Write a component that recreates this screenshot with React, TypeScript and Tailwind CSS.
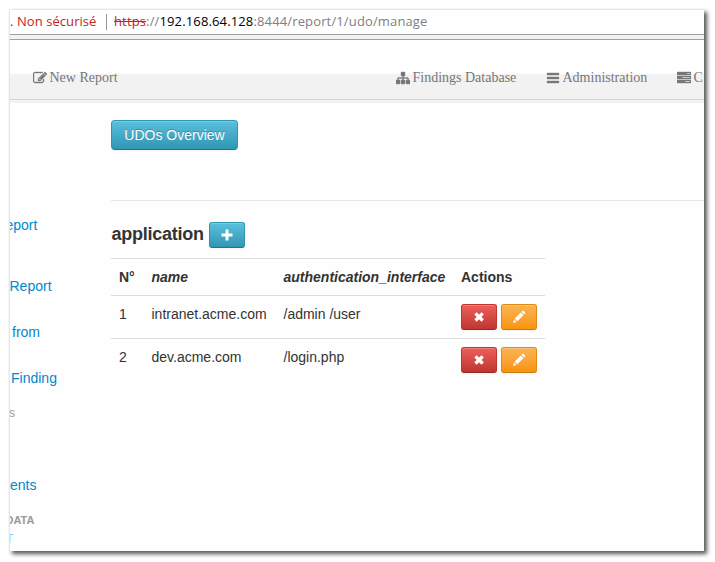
import type { ReactNode } from 'react';

const ICONS = {
  edit: 'M888 1184l116-116-152-152-116 116v56h96v96h56zm440-720q-16-16-33 1l-350 350q-17 17-1 33t33-1l350-350q17-17 1-33zm80 594v190q0 119-84.5 203.5t-203.5 84.5h-832q-119 0-203.5-84.5t-84.5-203.5v-832q0-119 84.5-203.5t203.5-84.5h832q63 0 117 25 15 7 18 23 3 17-9 29l-49 49q-14 14-32 8-23-6-45-6h-832q-66 0-113 47t-47 113v832q0 66 47 113t113 47h832q66 0 113-47t47-113v-126q0-13 9-22l64-64q15-15 35-7t20 29zm-96-738l288 288-672 672h-288v-288zm444 132l-92 92-288-288 92-92q28-28 68-28t68 28l152 152q28 28 28 68t-28 68z',
  sitemap: 'M1792 1248v320q0 40-28 68t-68 28h-320q-40 0-68-28t-28-68v-320q0-40 28-68t68-28h96v-192h-512v192h96q40 0 68 28t28 68v320q0 40-28 68t-68 28h-320q-40 0-68-28t-28-68v-320q0-40 28-68t68-28h96v-192h-512v192h96q40 0 68 28t28 68v320q0 40-28 68t-68 28h-320q-40 0-68-28t-28-68v-320q0-40 28-68t68-28h96v-192q0-52 38-90t90-38h512v-192h-96q-40 0-68-28t-28-68v-320q0-40 28-68t68-28h320q40 0 68 28t28 68v320q0 40-28 68t-68 28h-96v192h512q52 0 90 38t38 90v192h96q40 0 68 28t28 68z',
  bars: 'M1664 1344v128q0 26-19 45t-45 19h-1408q-26 0-45-19t-19-45v-128q0-26 19-45t45-19h1408q26 0 45 19t19 45zm0-512v128q0 26-19 45t-45 19h-1408q-26 0-45-19t-19-45v-128q0-26 19-45t45-19h1408q26 0 45 19t19 45zm0-512v128q0 26-19 45t-45 19h-1408q-26 0-45-19t-19-45v-128q0-26 19-45t45-19h1408q26 0 45 19t19 45z',
  tasks: 'M1024 1408h640v-128h-640v128zm-384-512h1024v-128h-1024v128zm640-512h384v-128h-384v128zm512 832v256q0 26-19 45t-45 19h-1664q-26 0-45-19t-19-45v-256q0-26 19-45t45-19h1664q26 0 45 19t19 45zm0-512v256q0 26-19 45t-45 19h-1664q-26 0-45-19t-19-45v-256q0-26 19-45t45-19h1664q26 0 45 19t19 45zm0-512v256q0 26-19 45t-45 19h-1664q-26 0-45-19t-19-45v-256q0-26 19-45t45-19h1664q26 0 45 19t19 45z',
};

function NavItem({ icon, className, children }: { icon: keyof typeof ICONS; className: string; children: ReactNode }) {
  return (
    <a className={`flex shrink-0 items-center whitespace-nowrap ${className}`}>
      <svg viewBox="0 0 1792 1792" className="mr-[3px] size-3.5 shrink-0 fill-current stroke-current" strokeWidth="50">
        <path d={ICONS[icon]} />
      </svg>
      {children}
    </a>
  );
}

const TEAL = 'border-[#2f96b4] border-b-[#24748c] bg-linear-to-b from-[#5bc0de] to-[#2f96b4]';
const RED = 'border-[#bd362f] border-b-[#942a25] bg-linear-to-b from-[#ee5f5b] to-[#bd362f]';
const ORANGE = 'border-[#e08a10] border-b-[#c97c10] bg-linear-to-b from-[#fbb450] to-[#f89406]';

function IconButton({ tone, children }: { tone: string; children: ReactNode }) {
  return (
    <button className={`flex h-[26px] w-9 items-center justify-center rounded-[3px] border text-white shadow-[inset_0_1px_0_rgba(255,255,255,0.2),0_1px_2px_rgba(0,0,0,0.05)] ${tone}`}>
      <svg viewBox="0 0 14 14" className="size-3.5">{children}</svg>
    </button>
  );
}

function RowActions() {
  return (
    <div className="flex gap-1">
      <IconButton tone={RED}>
        <path d="M3.5 3.3l7.2 7.2M10.7 3.3l-7.2 7.2" stroke="white" strokeWidth="3.3" />
      </IconButton>
      <IconButton tone={ORANGE}>
        <path fill="white" d="M1 13l1.1-3.7 2.6 2.6zM2.8 8.6l6-6 2.6 2.6-6 6zM9.5 1.9l.8-.8q.7-.6 1.4 0l1.2 1.2q.6.7 0 1.4l-.8.8z" />
      </IconButton>
    </div>
  );
}

const rows = [
  { id: 1, name: 'intranet.acme.com', auth: '/admin /user' },
  { id: 2, name: 'dev.acme.com', auth: '/login.php' },
];

export default function App() {
  return (
    <div className="h-[562px] w-[715px] overflow-hidden bg-white pt-[9px] pl-[9px] font-['Liberation_Sans',Arial,sans-serif] text-sm leading-5 text-[#333]">
      <div className="flex h-[542px] w-[695px] flex-col overflow-hidden rounded-tl-[2px] border-t border-l border-[#e5e5e5] bg-[#fefefe] shadow-[3px_3px_4px_#555]">
        <div className="flex h-6 shrink-0 items-center bg-white pb-[2px] font-['Open_Sans','Noto_Sans',sans-serif] text-[13px] whitespace-nowrap">
          <span className="w-[7px] overflow-hidden text-[#c5221f]">.</span>
          <span className="w-20 tracking-[0.06px] text-[#c5221f]">Non sécurisé</span>
          <span className="mt-0.5 mr-[7px] ml-[9px] h-4 w-px bg-[#999]" />
          <span className="tracking-[0.14px] text-[#808080]">
            <span className="text-[#c5221f] line-through">https</span>://<span className="text-black">192.168.64.128</span>:8444/report/1/udo/manage
          </span>
        </div>
        <div className="h-1.5 shrink-0 border-y border-[#9da2a0] bg-[#f2f2f2]" />
        <nav className="flex h-[60px] shrink-0 border-b border-[#d4d4d4] bg-linear-to-b from-[#fefefe] from-[33px] to-[#f2f2f2] to-[35px] pt-7 pl-[22.5px] font-['Liberation_Serif','Times_New_Roman',serif] text-[#777]">
          <NavItem icon="edit" className="h-5 w-[363px]">New Report</NavItem>
          <NavItem icon="sitemap" className="h-5 w-[150px]">Findings Database</NavItem>
          <NavItem icon="bars" className="h-5 w-[131px]">Administration</NavItem>
          <NavItem icon="tasks" className="h-5">C</NavItem>
        </nav>
        <div className="h-[3px] shrink-0 bg-[#f3f3f3]" />
        <div className="flex min-h-0 flex-1">
          <aside className="flex w-[101px] shrink-0 flex-col overflow-hidden pt-[112px] text-[#0088cc]">
            <span className="-ml-[4.5px] mb-[41px]">eport</span>
            <span className="mb-[26px] -ml-[0.5px]">Report</span>
            <span className="mb-[26px] pl-0.5">from</span>
            <span className="mb-[15px] pl-px">Finding</span>
            <span className="mb-[52px] -ml-px text-xs leading-5 text-[#999]">s</span>
            <span className="mb-[15px]">ents</span>
            <span className="-ml-[4.5px] text-[11px] font-bold text-[#999]">DATA</span>
            <span className="-ml-1 -mt-px text-xs leading-5 text-[#8fc8ea]">T</span>
          </aside>
          <main className="flex flex-1 flex-col items-start pt-[17px]">
            <button className={`h-[30px] w-[127px] rounded border text-white shadow-[inset_0_1px_0_rgba(255,255,255,0.2),0_1px_2px_rgba(0,0,0,0.05)] [text-shadow:0_-1px_0_rgba(0,0,0,0.25)] ${TEAL}`}>
              UDOs Overview
            </button>
            <hr className="mt-[50px] w-full border-[#e6e6e6]" />
            <div className="mt-[21px] flex">
              <h2 className="-mt-px w-[98px] pl-[0.5px] text-[18px] leading-[26px] font-bold tracking-[-0.24px]">application</h2>
              <IconButton tone={TEAL}>
                <path fill="white" d="M5.5 1.5h3v4h4v3h-4v4h-3v-4h-4v-3h4z" />
              </IconButton>
            </div>
            <table className="mt-2.5 w-[434px] table-fixed border-separate border-spacing-0 text-left [&_td]:border-t [&_td]:border-[#ddd] [&_td]:p-2 [&_td]:align-top [&_th]:border-t [&_th]:border-[#ddd] [&_th]:p-2">
              <thead>
                <tr className="whitespace-nowrap">
                  <th className="w-[32.5px]">N°</th>
                  <th className="w-[132px] italic">name</th>
                  <th className="w-[177.5px] italic">authentication_interface</th>
                  <th className="w-[92px]">Actions</th>
                </tr>
              </thead>
              <tbody>
                {rows.map((row) => (
                  <tr key={row.id}>
                    <td>{row.id}</td>
                    <td>{row.name}</td>
                    <td>{row.auth}</td>
                    <td><RowActions /></td>
                  </tr>
                ))}
              </tbody>
            </table>
          </main>
        </div>
      </div>
    </div>
  );
}
